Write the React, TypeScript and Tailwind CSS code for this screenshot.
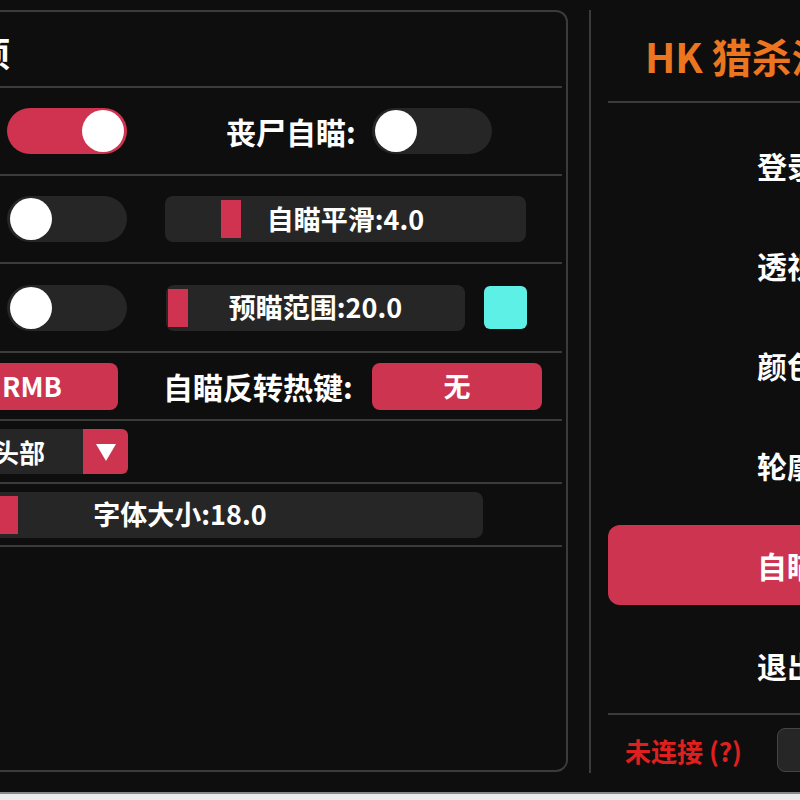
import React from 'react'

const Toggle = ({ on }: { on: boolean }) => (
  <div
    className={`w-[120px] h-[46px] shrink-0 rounded-full flex items-center px-[3px] ${
      on ? 'bg-[#cf3350] justify-end' : 'bg-[#262626] justify-start'
    }`}
  >
    <div className="w-[42px] h-[42px] rounded-full bg-white" />
  </div>
)

interface SliderProps {
  label: string
  className: string
  grabClass: string
}

const Slider = ({ label, className, grabClass }: SliderProps) => (
  <div className={`relative h-[46px] shrink-0 rounded-lg bg-[#262626] flex items-center justify-center ${className}`}>
    <div className={`absolute top-[4px] bottom-[4px] bg-[#cf3350] ${grabClass}`} />
    <span className="relative text-[27px] font-bold text-white">{label}</span>
  </div>
)

const Sep = () => <div className="h-[2px] mr-[4px] bg-[#3b3b3b]" />

const menu = ['登录', '透视', '颜色', '轮廓', '自瞄', '退出']

export default function App() {
  return (
    <div className="w-[800px] h-[800px] overflow-hidden bg-[#0e0e0e] flex flex-col font-['Noto_Sans_CJK_SC',sans-serif] text-white">
      <div className="h-[792px] flex pt-[10px]">
        {/* left panel, cut off on the left edge */}
        <div className="ml-[-200px] w-[768px] h-[762px] shrink-0 rounded-xl border-2 border-[#3b3b3b] flex flex-col">
          <div className="h-[74px] flex items-center pl-[72px] pt-[6px]">
            <span className="text-[34px] font-bold">自瞄选项</span>
          </div>
          <Sep />

          <div className="h-[86px] flex items-center pl-[205px]">
            <Toggle on />
            <span className="ml-[99px] w-[146px] text-[30px] font-bold">丧尸自瞄:</span>
            <Toggle on={false} />
          </div>
          <Sep />

          <div className="h-[86px] flex items-center pl-[205px]">
            <Toggle on={false} />
            <Slider label="自瞄平滑:4.0" className="ml-[38px] w-[361px]" grabClass="left-[56px] w-[20px]" />
          </div>
          <Sep />

          <div className="h-[87px] flex items-center pl-[205px]">
            <Toggle on={false} />
            <Slider label="预瞄范围:20.0" className="ml-[39px] w-[299px]" grabClass="left-[2px] w-[20px]" />
            <div className="ml-[19px] w-[43px] h-[43px] rounded-md bg-[#5cf0e6]" />
          </div>
          <Sep />

          <div className="h-[66px] flex items-center pl-[144px]">
            <div className="w-[172px] h-[47px] shrink-0 rounded-lg bg-[#cd3450] flex items-center justify-center text-[27px] font-bold">
              RMB
            </div>
            <span className="ml-[45px] w-[209px] text-[30px] font-bold">自瞄反转热键:</span>
            <div className="w-[170px] h-[47px] shrink-0 rounded-lg bg-[#cd3450] flex items-center justify-center text-[27px] font-bold">
              无
            </div>
          </div>
          <Sep />

          <div className="h-[61px] flex items-center pl-[181px]">
            <div className="w-[100px] h-[45px] bg-[#262626] rounded-l-md flex items-center pl-[10px] text-[26px] font-bold">
              头部
            </div>
            <div className="w-[45px] h-[45px] bg-[#cd3450] rounded-r-md flex items-center justify-center">
              <svg width="22" height="20" viewBox="0 0 22 20">
                <polygon points="1,2 21,2 11,19" fill="#ffffff" />
              </svg>
            </div>
          </div>
          <Sep />

          <div className="h-[61px] flex items-center pl-[75px]">
            <Slider label="字体大小:18.0" className="w-[606px]" grabClass="left-[123px] w-[18px]" />
          </div>
          <Sep />
        </div>

        <div className="ml-[21px] w-[2px] h-[763px] shrink-0 bg-[#3b3b3b]" />

        {/* right side menu */}
        <div className="ml-[17px] w-[360px] shrink-0 flex flex-col">
          <div className="h-[91px] flex items-center pl-[37px]">
            <span className="text-[40px] font-bold text-[#ec7620] whitespace-nowrap">HK 猎杀派对</span>
          </div>
          <div className="h-[2px] bg-[#3b3b3b]" />
          <div className="mt-[22px] flex flex-col gap-[20px]">
            {menu.map((m) => (
              <div
                key={m}
                className={`w-[358px] h-[80px] rounded-xl flex items-center justify-center text-[30px] font-bold ${
                  m === '自瞄' ? 'bg-[#cd3450]' : ''
                }`}
              >
                {m}
              </div>
            ))}
          </div>
          <div className="mt-[8px] h-[2px] bg-[#3b3b3b]" />
          <div className="mt-[13px] h-[44px] flex items-center">
            <span className="pl-[17px] w-[169px] text-[26px] font-bold text-[#e0201f]">未连接 (?)</span>
            <div className="w-[100px] h-[44px] rounded-lg bg-[#262626] border border-[#444444]" />
          </div>
        </div>
      </div>
      <div className="h-[8px] bg-[#ececec] border-t-2 border-[#8a8a8a]" />
    </div>
  )
}
